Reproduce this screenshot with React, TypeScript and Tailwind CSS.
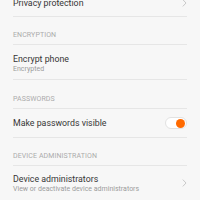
import React from "react";

// ── small pieces ──────────────────────────────────────────────

function Chevron() {
  return (
    <svg width="5" height="8" viewBox="0 0 5 8" className="shrink-0">
      <path d="M0.8 0.6 L4 4 L0.8 7.4" fill="none" stroke="#c4c4c4" strokeWidth="0.9" />
    </svg>
  );
}

function Toggle() {
  return (
    <div className="flex h-[12px] w-[22px] items-center justify-end rounded-full border border-[#e2e2e2] bg-white pr-[1px]">
      <div className="h-[9px] w-[9px] rounded-full bg-[#ff6a00]" />
    </div>
  );
}

function Header({ label, h }: { label: string; h: string }) {
  return (
    <div className={`flex items-end border-b border-[#e6e6e6] pb-[4px] ${h}`}>
      <span className="text-[7px] leading-[9px] tracking-[0.1px] text-[#ababab]">{label}</span>
    </div>
  );
}

const title = "text-[8.8px] leading-[12px] text-[#363636]";
const sub = "text-[7px] leading-[9px] text-[#9c9c9c]";

// ─────────────────────────────────────────────────────────────

export default function App() {
  return (
    <div
      className="h-[200px] w-[200px] overflow-hidden bg-[#f7f7f7] px-[13px]"
      style={{ fontFamily: "Roboto, 'Liberation Sans', sans-serif" }}
    >
      {/* privacy row (cut off at top) */}
      <div className="-mt-[10px] flex h-[27px] items-center justify-between border-b border-[#e6e6e6]">
        <span className={title}>Privacy protection</span>
        <Chevron />
      </div>

      <Header label="ENCRYPTION" h="h-[28px]" />

      <div className="flex h-[35px] flex-col justify-start border-b border-[#e6e6e6] pt-[8px]">
        <span className={title}>Encrypt phone</span>
        <span className={sub}>Encrypted</span>
      </div>

      <Header label="PASSWORDS" h="h-[29px]" />

      <div className="flex h-[29px] items-center justify-between border-b border-[#e6e6e6]">
        <span className={title}>Make passwords visible</span>
        <Toggle />
      </div>

      <Header label="DEVICE ADMINISTRATION" h="h-[28px]" />

      <div className="flex h-[35px] items-center justify-between border-b border-[#e6e6e6]">
        <div className="flex flex-col pt-[1px]">
          <span className={title}>Device administrators</span>
          <span className={sub}>View or deactivate device administrators</span>
        </div>
        <Chevron />
      </div>
    </div>
  );
}
